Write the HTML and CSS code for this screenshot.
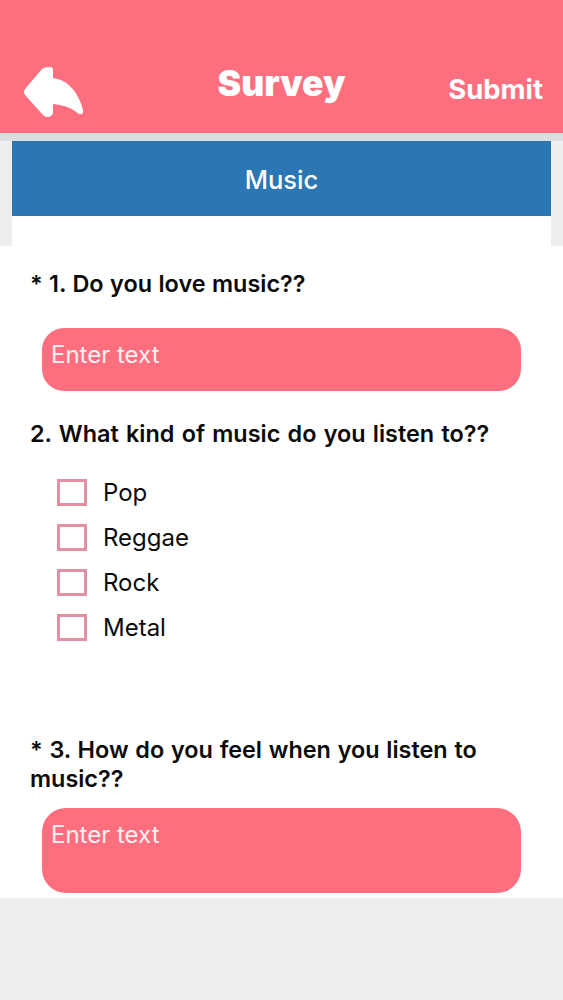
FILE: index.html
```html
<!DOCTYPE html>
<html lang="en">
<head>
<meta charset="utf-8">
<title>Survey</title>
<link rel="stylesheet" href="styles.css">
</head>
<body>
<header class="topbar">
  <svg class="back" viewBox="0 0 60 50" aria-hidden="true">
    <path d="M1 22 L18 2 Q20 0 26 0 Q29 0 29 3 L29 11 C45 13 55 27 59 43 Q60 48 55 47 C48 41 40 38 29 37 L29 46 Q28 50 23 50 Q21 50 19 48 L1 28 Q-1 25 1 22 Z" fill="#fff"/>
  </svg>
  <h1 class="title">Survey</h1>
  <span class="submit">Submit</span>
</header>
<div class="strip"></div>
<div class="cardtop">
  <div class="section">Music</div>
  <div class="cardgap"></div>
</div>
<main class="form">
  <p class="q q1">* 1. Do you love music??</p>
  <div class="input short">Enter text</div>
  <p class="q q2">2. What kind of music do you listen to??</p>
  <ul class="options">
    <li class="option"><span class="box"></span>Pop</li>
    <li class="option"><span class="box"></span>Reggae</li>
    <li class="option"><span class="box"></span>Rock</li>
    <li class="option"><span class="box"></span>Metal</li>
  </ul>
  <p class="q q3">* 3. How do you feel when you listen to music??</p>
  <div class="input tall">Enter text</div>
</main>
<div class="bottom"></div>
</body>
</html>
```
FILE: styles.css
```css
* { box-sizing: border-box; }
html, body { margin: 0; padding: 0; }
body {
  width: 563px;
  height: 1000px;
  overflow: hidden;
  background: #eeeeef;
  font-family: Inter, "Liberation Sans", sans-serif;
  color: #0b0b0b;
  display: flex;
  flex-direction: column;
}
.topbar {
  height: 133px;
  background: #fd6f7f;
  color: #fff;
  position: relative;
  flex: none;
}
.back {
  position: absolute;
  left: 24px;
  top: 67px;
  width: 60px;
  height: 50px;
}
.title {
  position: absolute;
  left: 0;
  right: 0;
  top: 63px;
  margin: 0;
  text-align: center;
  font-size: 35.5px;
  line-height: 42px;
  font-weight: 900;
}
.submit {
  position: absolute;
  right: 20px;
  top: 72px;
  font-size: 27.4px;
  line-height: 34px;
  font-weight: 700;
}
.strip { height: 8px; background: #dddde1; flex: none; }
.cardtop { padding: 0 12px; flex: none; }
.section {
  height: 75px;
  padding-top: 1px;
  background: #2b77b3;
  color: #fff;
  font-size: 25.5px;
  font-weight: 550;
  display: flex;
  align-items: center;
  justify-content: center;
}
.cardgap { height: 30px; background: #fff; }
.form {
  height: 652px;
  background: #fff;
  flex: none;
  padding: 0 30px;
  display: flex;
  flex-direction: column;
  overflow: hidden;
}
.q {
  margin: 0;
  font-size: 23.4px;
  line-height: 29px;
  font-weight: 600;
}
.q1 { margin-top: 23px; word-spacing: 0.6px; }
.q2 { margin-top: 28px; word-spacing: 1.4px; }
.q3 { margin-top: 93px; word-spacing: 0.9px; }
.input {
  margin-left: 12px;
  width: 479px;
  background: #fd6f7f;
  color: #fff0f0;
  font-size: 24px;
  line-height: 28px;
  padding: 13px 9px 0;
}
.short { margin-top: 30px; height: 63px; border-radius: 22px; }
.tall { margin-top: 15px; height: 85px; border-radius: 24px; }
.options {
  list-style: none;
  margin: 29px 0 0 27px;
  padding: 0;
  display: flex;
  flex-direction: column;
  gap: 15px;
}
.option {
  display: flex;
  align-items: center;
  height: 30px;
  font-size: 24px;
  font-weight: 400;
}
.box {
  width: 30px;
  height: 27px;
  border: 3px solid #e48fa2;
  margin-right: 16px;
}
.bottom { flex: 1; background: #eeeeef; }
```
